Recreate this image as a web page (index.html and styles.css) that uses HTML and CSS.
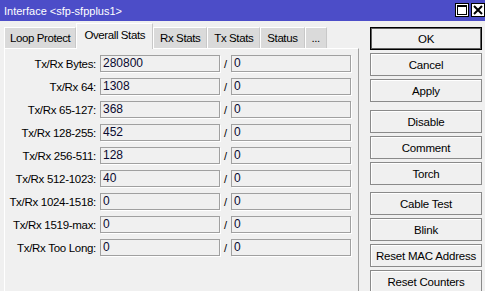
FILE: index.html
```html
<!DOCTYPE html>
<html lang="en">
<head>
    <meta charset="UTF-8">
    <title>Interface &lt;sfp-sfpplus1&gt;</title>
    <link rel="stylesheet" href="styles.css">
</head>
<body>
    <div class="titlebar">
        <span class="title">Interface &lt;sfp-sfpplus1&gt;</span>
        <div class="win-buttons">
            <span class="win-btn">
                <svg width="12" height="12" viewBox="0 0 12 12"><rect x="1.5" y="1.5" width="9" height="9" fill="none" stroke="#000" stroke-width="1"/><line x1="1" y1="2" x2="11" y2="2" stroke="#000" stroke-width="2"/></svg>
            </span>
            <span class="win-btn">
                <svg width="12" height="12" viewBox="0 0 12 12"><path d="M2 2 L10 10 M10 2 L2 10" stroke="#000" stroke-width="2"/></svg>
            </span>
        </div>
    </div>

    <div class="main">
        <div class="left">
            <div class="tabs">
                <div class="tab first">Loop Protect</div>
                <div class="tab active">Overall Stats</div>
                <div class="tab">Rx Stats</div>
                <div class="tab">Tx Stats</div>
                <div class="tab">Status</div>
                <div class="tab">...</div>
            </div>
            <div class="panel">
                <div class="rows">
                    <label>Tx/Rx Bytes:</label><div class="field">280800</div><span class="sep">/</span><div class="field">0</div>
                    <label>Tx/Rx 64:</label><div class="field">1308</div><span class="sep">/</span><div class="field">0</div>
                    <label>Tx/Rx 65-127:</label><div class="field">368</div><span class="sep">/</span><div class="field">0</div>
                    <label>Tx/Rx 128-255:</label><div class="field">452</div><span class="sep">/</span><div class="field">0</div>
                    <label>Tx/Rx 256-511:</label><div class="field">128</div><span class="sep">/</span><div class="field">0</div>
                    <label>Tx/Rx 512-1023:</label><div class="field">40</div><span class="sep">/</span><div class="field">0</div>
                    <label>Tx/Rx 1024-1518:</label><div class="field">0</div><span class="sep">/</span><div class="field">0</div>
                    <label>Tx/Rx 1519-max:</label><div class="field">0</div><span class="sep">/</span><div class="field">0</div>
                    <label>Tx/Rx Too Long:</label><div class="field">0</div><span class="sep">/</span><div class="field">0</div>
                </div>
            </div>
        </div>

        <div class="actions">
            <button class="btn default">OK</button>
            <button class="btn">Cancel</button>
            <button class="btn">Apply</button>
            <button class="btn group">Disable</button>
            <button class="btn">Comment</button>
            <button class="btn">Torch</button>
            <button class="btn group2">Cable Test</button>
            <button class="btn">Blink</button>
            <button class="btn">Reset MAC Address</button>
            <button class="btn">Reset Counters</button>
        </div>
    </div>
</body>
</html>
```

FILE: styles.css
```css
/* Janela */
body {
    margin: 0;
    background: #f0f0f0;
    font-family: "Liberation Sans", Arial, sans-serif;
    font-size: 11px;
    color: #000;
    height: 291px;
    overflow: hidden;
}

.titlebar {
    height: 21px;
    background: #4c4dc8;
    display: flex;
    align-items: center;
    justify-content: space-between;
    padding-left: 4px;
}

.title {
    color: #fff;
    font-size: 11px;
}

.win-buttons {
    display: flex;
    gap: 2px;
    align-self: flex-start;
    margin-top: 3px;
}

.win-btn {
    width: 12px;
    height: 12px;
    background: #fff;
    border: 1px solid #000;
    display: flex;
    align-items: center;
    justify-content: center;
}

/* Conteudo */
.main {
    display: flex;
    height: 270px;
    overflow: hidden;
}

.left {
    width: 359px;
}

.tabs {
    display: flex;
    padding-left: 4px;
    height: 27px;
    align-items: flex-end;
}

.tab {
    height: 20px;
    line-height: 20px;
    padding: 0 6px;
    background: #dadada;
    border-left: 1px solid #fff;
    border-top: 1px solid #fff;
    border-right: 1px solid #c8c8c8;
    font-size: 11.5px;
    letter-spacing: -0.4px;
}

.tab.first {
    padding: 0 5px;
}

.tab.active {
    height: 25px;
    line-height: 23px;
    padding: 0 7px;
    background: #f0f0f0;
    margin-bottom: -1px;
    position: relative;
    z-index: 1;
}

.panel {
    border-top: 1px solid #fff;
    border-left: 1px solid #fff;
    border-right: 1px solid #a0a0a0;
    height: 236px;
    margin-left: 4px;
    padding-top: 6px;
}

.rows {
    display: grid;
    grid-template-columns: 95px 120px 11px 120px;
    grid-auto-rows: 17px;
    row-gap: 6px;
    align-items: center;
}

.rows label {
    text-align: right;
    padding-right: 4px;
    font-size: 11.5px;
    letter-spacing: -0.3px;
    white-space: nowrap;
}

.field {
    height: 15px;
    line-height: 15px;
    border: 1px solid #a0a0a0;
    box-shadow: 1px 1px 0 #fff;
    padding-left: 2px;
    font-size: 12px;
    color: #0a0a30;
}

.sep {
    text-align: center;
    font-size: 11px;
}

/* Botoes */
.actions {
    margin-left: 11px;
    margin-top: 6px;
    width: 112px;
    display: flex;
    flex-direction: column;
    gap: 3px;
}

.btn {
    height: 23px;
    flex: none;
    background: #f0f0f0;
    border: 1px solid #8a8a8a;
    box-shadow: inset 1px 1px 0 #fff;
    font-family: "Liberation Sans", Arial, sans-serif;
    font-size: 11.5px;
    letter-spacing: -0.2px;
    color: #000;
    padding: 0;
}

.btn.default {
    border-color: #000;
    box-shadow: inset 0 0 0 1px #606060;
}

.btn.group {
    margin-top: 5px;
}

.btn.group2 {
    margin-top: 4px;
}
```
